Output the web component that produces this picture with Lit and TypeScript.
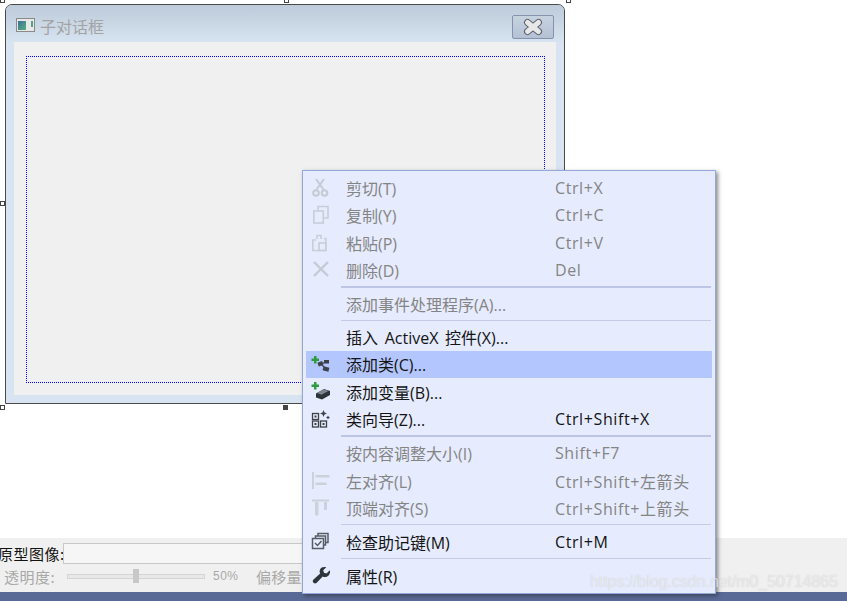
import { LitElement, html, css, svg } from "lit";
import { customElement } from "lit/decorators.js";

const ic: Record<string, any> = {
  cut: svg`<g fill="none" stroke="#c6cad4" stroke-width="2"><path d="M5 1l7.500 10.500M13 1L5.500 11.500"/><circle cx="5" cy="15" r="2.800"/><circle cx="13.500" cy="15" r="2.800"/></g>`,
  copy: svg`<g fill="none" stroke="#cacdd8" stroke-width="1.600"><path d="M7 5V1.500h10V13h-4"/><rect x="2.800" y="6" width="9.500" height="12"/></g>`,
  paste: svg`<g fill="none" stroke="#cacdd8" stroke-width="1.600"><path d="M6 6V2.500h4V6"/><path d="M5 7H1.800v10.500h13V5.500h-2"/><rect x="8" y="10" width="6.800" height="7.500"/></g>`,
  del: svg`<path d="M3 2l14 14M17 2L3 16" stroke="#c6cad4" stroke-width="2.400" fill="none"/>`,
  addClass: svg`<path d="M3 2h2.500v2.500H8V7H5.500v2.500H3V7H.5V4.500H3z" fill="#2f9a3e"/><g fill="#3c4048"><rect x="7" y="8" width="5" height="4" transform="rotate(-20 9 10)"/><rect x="13" y="6" width="5" height="3.500"/><rect x="12" y="13" width="6" height="4" transform="rotate(15 15 15)"/></g><path d="M10 10l5-2M10 10l5 5" stroke="#3c4048" stroke-width="1.300" fill="none"/>`,
  addVar: svg`<path d="M3 0h2.500v2.500H8V5H5.500v2.500H3V5H.5V2.500H3z" fill="#2f9a3e"/><path d="M5 11.500l8-4.500 6 2v4l-8 4.500-6-2z" fill="#2f333a"/><path d="M6 11l7-3.700 4.500 1.700-7 3.700z" fill="#80848c"/>`,
  wizard: svg`<g fill="#e8ecfa" stroke="#3c4048" stroke-width="1.300"><rect x="1.500" y="4.500" width="6" height="6"/><rect x="1.500" y="12" width="6" height="6"/><rect x="9.500" y="12" width="6" height="6"/></g><path d="M3.500 6.500h2v2h-2zM3.500 14h2v2h-2zM11.500 14h2v2h-2z" fill="#3c4048"/><path d="M12.500 1l1 2.500 2.500 1-2.500 1-1 2.500-1-2.500-2.500-1 2.500-1zM17 6.500l.7 1.300 1.300.7-1.300.7-.7 1.300-.7-1.300-1.300-.7 1.300-.7z" fill="#3c4048"/>`,
  alignL: svg`<path d="M2 1v17" stroke="#cdd1dc" stroke-width="2" fill="none"/><path d="M4.500 4h14v2.500h-14zM4.500 11.500h11V14h-11z" fill="#cdd1dc"/>`,
  alignT: svg`<path d="M1 2.500h17" stroke="#cdd1dc" stroke-width="2" fill="none"/><path d="M4 4h3.500v13.500H4zM13 4h3v8h-3z" fill="#cdd1dc"/>`,
  check: svg`<g fill="#e6ecfe" stroke="#585c64" stroke-width="1.500"><rect x="7" y="1.500" width="10" height="9"/><rect x="4.500" y="4" width="10" height="9"/><rect x="1.500" y="6.500" width="11" height="10"/></g><path d="M4 11l2.500 2.500L10.500 9" fill="none" stroke="#585c64" stroke-width="1.500"/>`,
  wrench: svg`<path d="M18.500 4.500l-3 3-2.500-.8-.8-2.500 3-3c-2.500-.8-5 0-6 2-.8 1.500-.7 3 0 4.300L2.500 13.500c-1 1-1 2.200 0 3.200s2.200 1 3.200 0l6-6.200c1.400.7 3 .8 4.500 0 2.200-1.200 3.200-3.500 2.800-6z" fill="#2f333a"/>`,
};

type Row = { t?: string; k?: string; i?: string; off?: boolean; hot?: boolean; sep?: boolean; thick?: boolean; tight?: boolean };
const rows: Row[] = [
  { t: "剪切(T)", k: "Ctrl+X", i: "cut", off: true },
  { t: "复制(Y)", k: "Ctrl+C", i: "copy", off: true },
  { t: "粘贴(P)", k: "Ctrl+V", i: "paste", off: true },
  { t: "删除(D)", k: "Del", i: "del", off: true },
  { sep: true, thick: true },
  { t: "添加事件处理程序(A)...", off: true },
  { sep: true, tight: true },
  { t: "插入 ActiveX 控件(X)..." },
  { t: "添加类(C)...", i: "addClass", hot: true },
  { t: "添加变量(B)...", i: "addVar" },
  { t: "类向导(Z)...", k: "Ctrl+Shift+X", i: "wizard" },
  { sep: true, thick: true },
  { t: "按内容调整大小(I)", k: "Shift+F7", off: true },
  { t: "左对齐(L)", k: "Ctrl+Shift+左箭头", i: "alignL", off: true },
  { t: "顶端对齐(S)", k: "Ctrl+Shift+上箭头", i: "alignT", off: true },
  { sep: true },
  { t: "检查助记键(M)", k: "Ctrl+M", i: "check" },
  { sep: true },
  { t: "属性(R)", i: "wrench" },
];

@customElement("app-root")
export class AppRoot extends LitElement {
  static styles = css`
    :host { display: block; width: 847px; height: 601px; position: relative; overflow: hidden; background: #fff;
      font-family: "Open Sans", "Noto Sans CJK SC", sans-serif; }
    .page { display: flex; flex-direction: column; height: 601px; }
    .surface { height: 538px; padding: 4px 0 0 5px; box-sizing: border-box; flex: none; }
    .dialog { width: 560px; height: 400px; box-sizing: border-box; border: 1px solid #4a4a4a; border-radius: 7px 7px 0 0;
      background: #d8e4f1; display: flex; flex-direction: column; padding: 0 8px 8px 8px; }
    .title { height: 37px; margin: 0 -8px; padding: 3px 10px 0 10px; box-sizing: border-box; flex: none; display: flex; align-items: center; gap: 4px;
      background: linear-gradient(#bdcbda, #d6e3f0); border-radius: 6px 6px 0 0; }
    .title span { font: 16px "Noto Sans CJK SC", sans-serif; color: #a3a3a3; flex: 1; margin-top: 2px; }
    .close { width: 42px; height: 24px; box-sizing: border-box; border: 1px solid #8692ad; border-radius: 2px; margin-top: 4px;
      background: linear-gradient(#c8d3e0, #b3c1d4); display: flex; align-items: center; justify-content: center; }
    .client { flex: 1; background: #f0f0f0; padding: 14px 11px 12px 12px; display: flex; }
    .dots { flex: 1;
      background:
        linear-gradient(90deg, #00f 50%, transparent 50%) left top / 2px 1px repeat-x,
        linear-gradient(90deg, #00f 50%, transparent 50%) left bottom / 2px 1px repeat-x,
        linear-gradient(#00f 50%, transparent 50%) left top / 1px 2px repeat-y,
        linear-gradient(#00f 50%, transparent 50%) right top / 1px 2px repeat-y; }
    .handle { position: absolute; width: 5px; height: 5px; box-sizing: border-box; border: 1px solid #444; background: #fff; }
    .handle.on { background: #444; }
    .panel { height: 54px; flex: none; background: #f0f0f0; font: 15px "Noto Sans CJK SC", sans-serif; overflow: hidden; box-sizing: border-box; padding-top: 5px; }
    .r1 { display: flex; align-items: center; margin-left: -2px; height: 21px; color: #111; }
    .r1 b { font-weight: 400; letter-spacing: .5px; width: 65px; flex: none; white-space: nowrap; }
    .field { width: 240px; height: 21px; box-sizing: border-box; border: 1px solid #c8c8c8; background: #f6f6f6; flex: none; }
    .r2 { display: flex; align-items: center; height: 24px; color: #a8a8a8; padding-left: 4px; }
    .r2 .lb { letter-spacing: .5px; width: 52px; flex: none; white-space: nowrap; }
    .slider { width: 138px; height: 5px; box-sizing: border-box; border: 1px solid #d4d4d4; background: #e8e8e8; margin: 0 8px 0 11px; flex: none;
      display: flex; align-items: center; padding-left: 65px; }
    .slider i { display: block; width: 6px; height: 14px; background: #c8c8c8; flex: none; }
    .pct { font: 12px "Liberation Sans", sans-serif; width: 43px; letter-spacing: .5px; flex: none; }
    .off3 { letter-spacing: .3px; white-space: nowrap; }
    .bar { height: 9px; flex: none; background: #5a6a96; }
    .menu { position: absolute; left: 302px; top: 170px; width: 414px; height: 424px; box-sizing: border-box; border: 1px solid #93a7d8;
      background: #e6ecfe; padding: 3px 3px 4px; box-shadow: 2px 2px 4px rgba(40,40,50,.55); }
    .row { height: 27.5px; display: flex; align-items: center; font-size: 16px; color: #141414; white-space: nowrap; }
    .row.off { color: #848484; }
    .row.hot { background: #b3c6fd; }
    .ico { width: 40px; flex: none; display: flex; align-items: center; padding-left: 5px; box-sizing: border-box; }
    .lab { width: 209px; flex: none; word-spacing: 2.5px; }
    .key { letter-spacing: .6px; }
    .sep { height: 6.25px; display: flex; align-items: center; padding-left: 35px; padding-right: 1px; }
    .sep.tight { height: 5.25px; }
    .sep i { display: block; flex: 1; height: 1px; background: #c3cbe6; }
    .sep.thick i { height: 2px; background: #bcc5e4; }
    .mark { position: absolute; left: 590px; top: 573px; font: 16px "Liberation Sans", sans-serif; color: rgba(255,255,255,.62); letter-spacing: -.06px;
      text-shadow: 0 0 1px rgba(120,120,120,.4); white-space: nowrap; }
  `;

  render() {
    const handles: [number, number, boolean][] = [
      [0, -2, false], [284, -2, false], [566, -2, false], [0, 201, false], [0, 405, false], [283, 405, true],
    ];
    return html`
      <div class="page">
        <div class="surface">
          <div class="dialog">
            <div class="title">
              <svg width="20" height="15" viewBox="0 0 20 15">
                <rect x=".5" y=".5" width="18" height="13" fill="#e8e8e8" stroke="#8a8a8a"/>
                <defs><linearGradient id="g" x1="0" y1="0" x2="1" y2="1"><stop offset="0" stop-color="#3a6f9c"/><stop offset="1" stop-color="#58b07c"/></linearGradient></defs>
                <rect x="2" y="3" width="8" height="9" fill="url(#g)"/>
                <rect x="15" y="3" width="2" height="6" fill="#4ca884"/>
              </svg>
              <span>子对话框</span>
              <div class="close">
                <svg width="22" height="18" viewBox="0 0 22 18">
                  <path d="M5.500 4.500L16.500 13.500M16.500 4.500L5.500 13.500" stroke="#5c6270" stroke-width="7" stroke-linecap="round" fill="none"/>
                  <path d="M5.500 4.500L16.500 13.500M16.500 4.500L5.500 13.500" stroke="#e8e8e8" stroke-width="5" stroke-linecap="round" fill="none"/>
                </svg>
              </div>
            </div>
            <div class="client"><div class="dots"></div></div>
          </div>
        </div>
        <div class="panel">
          <div class="r1"><b>原型图像:</b><div class="field"></div></div>
          <div class="r2"><span class="lb">透明度:</span><div class="slider"><i></i></div><span class="pct">50%</span><span class="off3">偏移量</span></div>
        </div>
        <div class="bar"></div>
      </div>
      ${handles.map(([x, y, on]) => html`<div class="handle ${on ? "on" : ""}" style="left:${x}px;top:${y}px"></div>`)}
      <div class="menu">
        ${rows.map((r) =>
          r.sep
            ? html`<div class="sep ${r.thick ? "thick" : ""} ${r.tight ? "tight" : ""}"><i></i></div>`
            : html`<div class="row ${r.off ? "off" : ""} ${r.hot ? "hot" : ""}">
                <div class="ico">${r.i ? html`<svg width="20" height="20" viewBox="0 0 20 20">${ic[r.i]}</svg>` : ""}</div>
                <div class="lab">${r.t}</div><div class="key">${r.k ?? ""}</div>
              </div>`
        )}
      </div>
      <div class="mark">https://blog.csdn.net/m0_50714865</div>
    `;
  }
}
